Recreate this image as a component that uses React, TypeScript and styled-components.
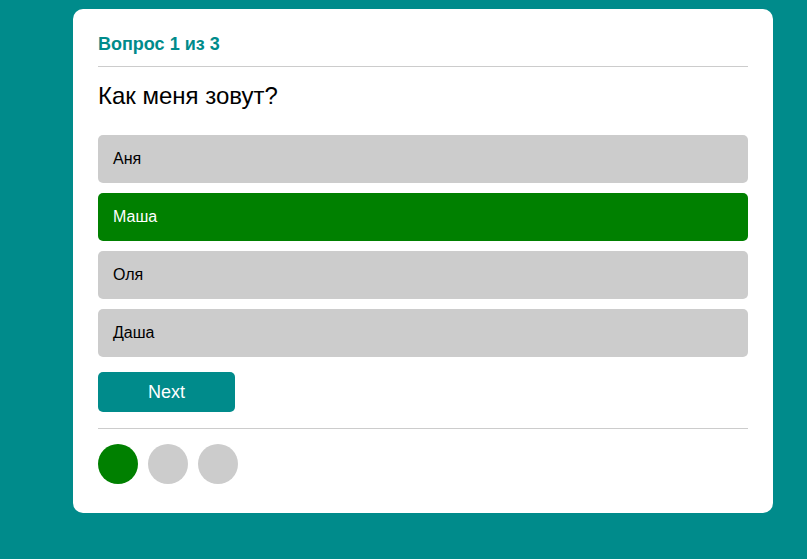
import React, { useState } from "react";
import styled, { createGlobalStyle } from "styled-components";

const GlobalStyle = createGlobalStyle`
  html, body {
    margin: 0;
    padding: 0;
    background: #008b8b;
    font-family: "Liberation Sans", Arial, sans-serif;
  }
`;

const Page = styled.div`
  min-height: 559px;
  padding: 9px 0 0 73px;
  box-sizing: border-box;
`;

const Card = styled.div`
  width: 700px;
  height: 504px;
  box-sizing: border-box;
  background: #fff;
  border-radius: 10px;
  padding: 25px 25px 29px;
  display: flex;
  flex-direction: column;
`;

const Header = styled.div`
  color: #008b8b;
  font-size: 18px;
  font-weight: bold;
  line-height: 21px;
  padding-bottom: 11px;
  border-bottom: 1px solid #ccc;
`;

const Question = styled.div`
  margin-top: 15px;
  font-size: 24px;
  line-height: 28px;
  color: #000;
`;

const Options = styled.div`
  margin-top: 25px;
  display: flex;
  flex-direction: column;
  gap: 10px;
`;

const Option = styled.div<{ $selected?: boolean }>`
  height: 48px;
  box-sizing: border-box;
  padding: 0 15px;
  display: flex;
  align-items: center;
  border-radius: 5px;
  font-size: 16px;
  background: ${(p) => (p.$selected ? "#008000" : "#ccc")};
  color: ${(p) => (p.$selected ? "#fff" : "#000")};
  cursor: pointer;
`;

const NextButton = styled.button`
  margin-top: 15px;
  width: 137px;
  height: 40px;
  border: none;
  border-radius: 5px;
  background: #008b8b;
  color: #fff;
  font-family: "Liberation Sans", Arial, sans-serif;
  font-size: 18px;
  cursor: pointer;
  padding: 0;
  display: block;
`;

const Progress = styled.div`
  margin-top: 16px;
  border-top: 1px solid #ccc;
  padding-top: 15px;
  display: flex;
  gap: 10px;
`;

const Dot = styled.div<{ $done?: boolean }>`
  width: 40px;
  height: 40px;
  border-radius: 50%;
  background: ${(p) => (p.$done ? "#008000" : "#ccc")};
`;

const options = ["Аня", "Маша", "Оля", "Даша"];

export default function App() {
  const [selected, setSelected] = useState(1);
  return (
    <>
      <GlobalStyle />
      <Page>
        <Card>
          <Header>Вопрос 1 из 3</Header>
          <Question>Как меня зовут?</Question>
          <Options>
            {options.map((o, i) => (
              <Option key={o} $selected={i === selected} onClick={() => setSelected(i)}>
                {o}
              </Option>
            ))}
          </Options>
          <div>
            <NextButton>Next</NextButton>
          </div>
          <Progress>
            <Dot $done />
            <Dot />
            <Dot />
          </Progress>
        </Card>
      </Page>
    </>
  );
}
